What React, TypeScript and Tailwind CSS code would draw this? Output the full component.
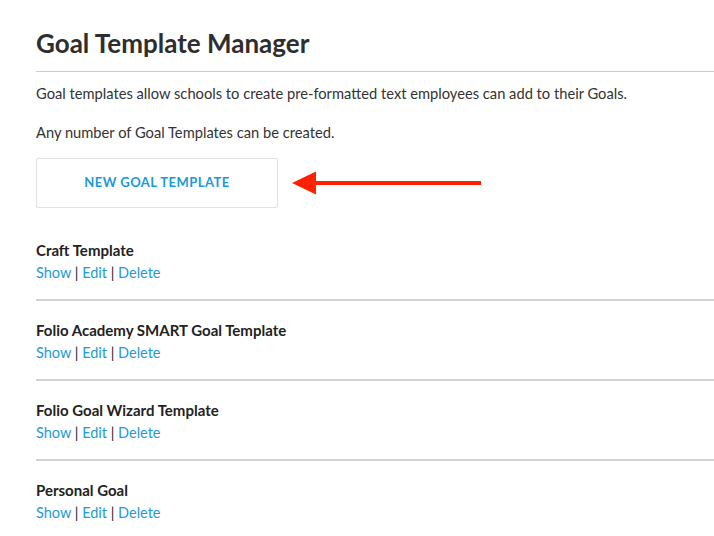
const templates = [
  "Craft Template",
  "Folio Academy SMART Goal Template",
  "Folio Goal Wizard Template",
  "Personal Goal",
];

const Arrow = () => (
  <svg width="190" height="24" viewBox="0 0 190 24" className="block">
    <line x1="20" y1="12" x2="189" y2="12" stroke="#ff2200" strokeWidth="4" />
    <polygon points="0,12 24,0.5 24,23.5" fill="#ff2200" />
  </svg>
);

export default function App() {
  return (
    <div
      className="min-h-screen bg-white pl-9 text-[#333]"
      style={{ fontFamily: "Lato, 'Noto Sans', sans-serif" }}
    >
      <h1 className="border-b border-[#cccccc] pt-[27px] pb-[12px] text-[26px] font-bold leading-[32px] text-[#2e2e2e]">
        Goal Template Manager
      </h1>
      <p className="mt-[11px] text-[14.7px] leading-5">
        Goal templates allow schools to create pre-formatted text employees can add to their Goals.
      </p>
      <p className="mt-[19px] text-[14.7px] leading-5">Any number of Goal Templates can be created.</p>

      <div className="mt-4 flex items-center gap-[14px]">
        <button className="h-[50px] w-[242px] rounded-[2px] border border-[#e2e2e2] bg-white text-[13px] font-bold tracking-[0.45px] text-[#1a9ad8] uppercase">
          New Goal Template
        </button>
        <Arrow />
      </div>

      <div className="mt-[13px]">
        {templates.map((t, i) => (
          <div
            key={t}
            className={`pt-[19px] ${i < templates.length - 1 ? "border-b-2 border-[#d2d2d6] pb-4" : ""}`}
          >
            <div className="text-[15px] font-bold leading-5 text-[#222]">{t}</div>
            <div className="mt-[3px] text-[14.5px] leading-5 text-[#222]">
              <a href="#" className="text-[#1b9bd7]">Show</a> |{" "}
              <a href="#" className="text-[#1b9bd7]">Edit</a> |{" "}
              <a href="#" className="text-[#1b9bd7]">Delete</a>
            </div>
          </div>
        ))}
      </div>
    </div>
  );
}
